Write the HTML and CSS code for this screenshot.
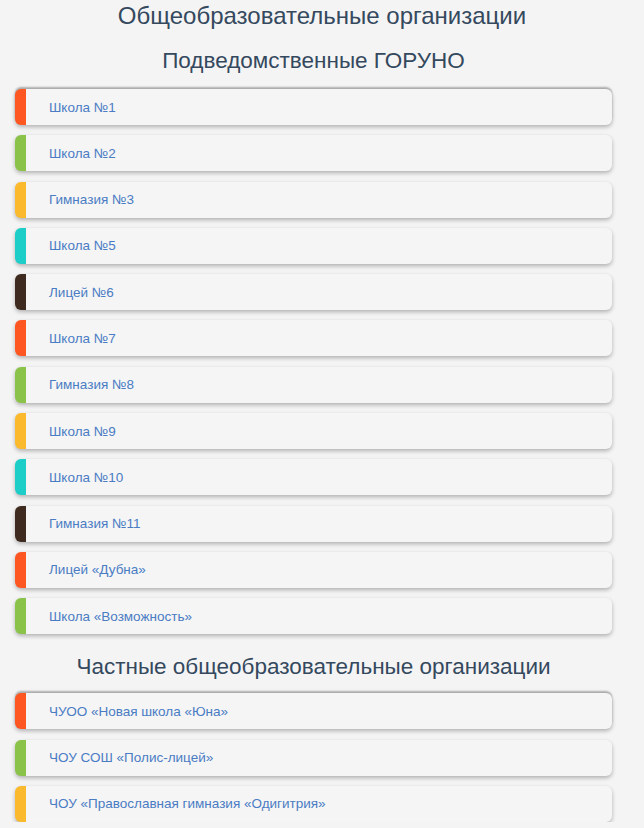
FILE: index.html
```html
<!DOCTYPE html>
<html lang="ru">
<head>
    <meta charset="UTF-8">
    <meta name="viewport" content="width=device-width, initial-scale=1.0">
    <title>Общеобразовательные организации</title>
    <link rel="stylesheet" href="styles.css">
</head>
<body>
    <h1 class="page-title">Общеобразовательные организации</h1>

    <div class="org-block">
        <h2 class="group-title">Подведомственные ГОРУНО</h2>
        <ul class="org-list">
            <li class="org-item c-orange"><a href="#">Школа №1</a></li>
            <li class="org-item c-green"><a href="#">Школа №2</a></li>
            <li class="org-item c-yellow"><a href="#">Гимназия №3</a></li>
            <li class="org-item c-teal"><a href="#">Школа №5</a></li>
            <li class="org-item c-brown"><a href="#">Лицей №6</a></li>
            <li class="org-item c-orange"><a href="#">Школа №7</a></li>
            <li class="org-item c-green"><a href="#">Гимназия №8</a></li>
            <li class="org-item c-yellow"><a href="#">Школа №9</a></li>
            <li class="org-item c-teal"><a href="#">Школа №10</a></li>
            <li class="org-item c-brown"><a href="#">Гимназия №11</a></li>
            <li class="org-item c-orange"><a href="#">Лицей «Дубна»</a></li>
            <li class="org-item c-green"><a href="#">Школа «Возможность»</a></li>
        </ul>

        <h2 class="group-title">Частные общеобразовательные организации</h2>
        <ul class="org-list">
            <li class="org-item c-orange"><a href="#">ЧУОО «Новая школа «Юна»</a></li>
            <li class="org-item c-green"><a href="#">ЧОУ СОШ «Полис-лицей»</a></li>
            <li class="org-item c-yellow"><a href="#">ЧОУ «Православная гимназия «Одигитрия»</a></li>
        </ul>
    </div>
</body>
</html>
```

FILE: styles.css
```css
/* Общие стили */
* {
    margin: 0;
    padding: 0;
    box-sizing: border-box;
}

body {
    background: #f4f4f4;
    font-family: 'Liberation Sans', Arial, sans-serif;
    color: #34495e;
}

/* Заголовки */
.page-title {
    font-size: 24px;
    font-weight: 400;
    line-height: 32px;
    text-align: center;
}

.org-block {
    width: 597px;
    margin-left: 15px;
}

.group-title {
    font-size: 22.5px;
    font-weight: 400;
    line-height: 30px;
    text-align: center;
    margin: 14px 0 13px;
}

.org-list + .group-title {
    margin: 18px 0 11px;
}

/* Список организаций */
.org-list {
    list-style: none;
    display: flex;
    flex-direction: column;
    gap: 10.3px;
}

.org-item {
    display: flex;
    align-items: center;
    height: 36px;
    background: #f5f5f5;
    border-left: 11px solid #ff5722;
    border-radius: 6px;
    box-shadow: 0 2px 4px rgba(0, 0, 0, 0.28);
}

.org-item:first-child {
    box-shadow: 0 -2px 2px rgba(0, 0, 0, 0.28), 0 2px 4px rgba(0, 0, 0, 0.28);
}

.org-item a {
    padding-left: 23px;
    font-size: 13.5px;
    color: #4a7cc4;
    text-decoration: none;
}

.org-item a:hover {
    text-decoration: underline;
}

/* Цвета полосок */
.c-orange { border-left-color: #ff5722; }
.c-green  { border-left-color: #8bc34a; }
.c-yellow { border-left-color: #fbb92e; }
.c-teal   { border-left-color: #1ccdc8; }
.c-brown  { border-left-color: #3e2a1f; }
```
